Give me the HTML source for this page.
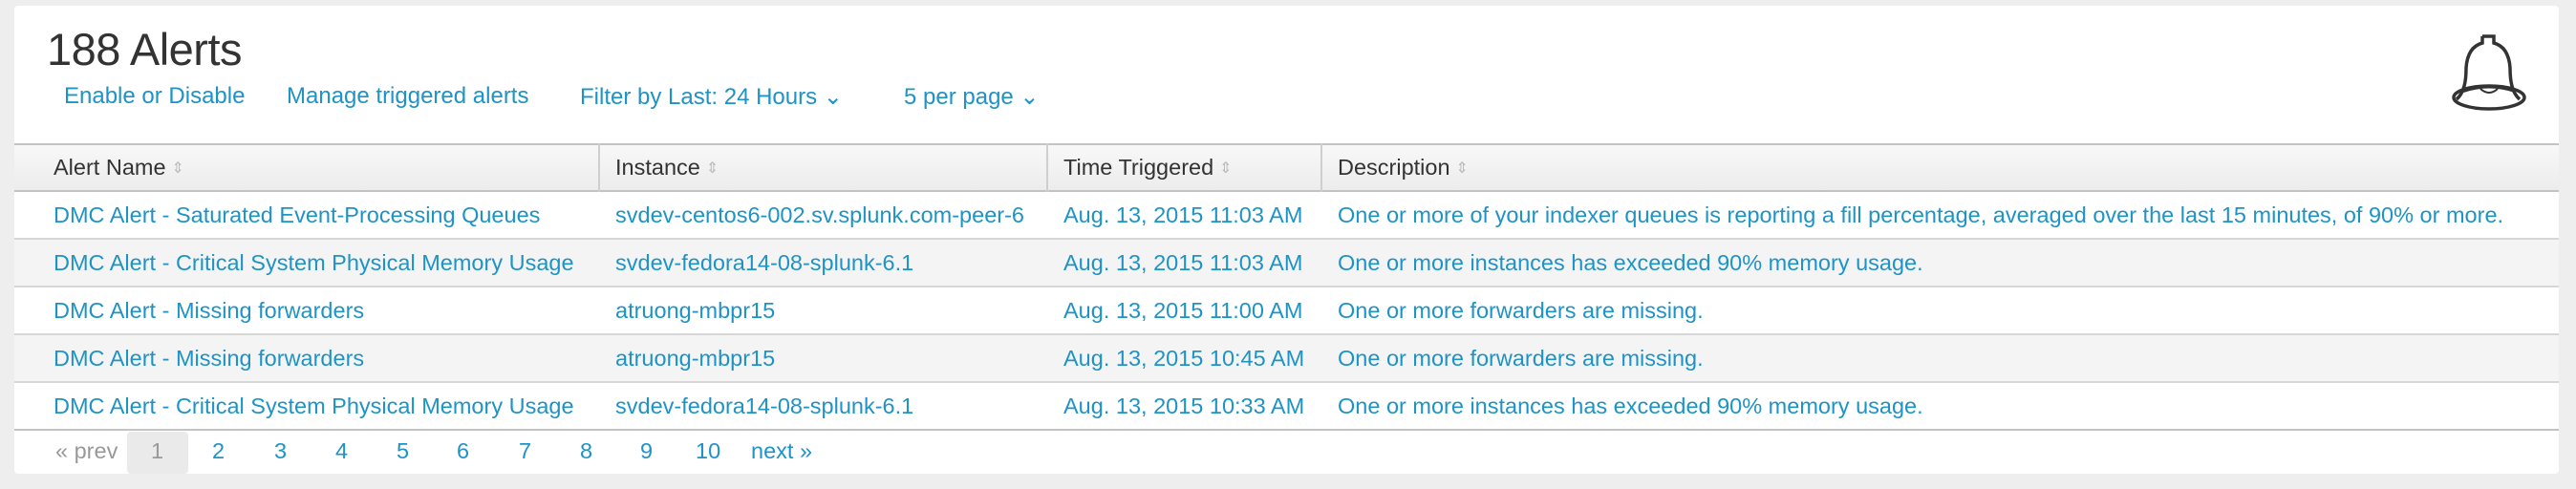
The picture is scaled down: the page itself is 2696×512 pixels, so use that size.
<!DOCTYPE html>
<html><head><meta charset="utf-8"><style>
*{margin:0;padding:0;box-sizing:border-box}
body{width:2696px;height:512px;background:#eeeeee;font-family:"Liberation Sans",sans-serif;position:relative;overflow:hidden}
.panel{position:absolute;left:15px;top:6px;width:2663px;height:490px;background:#fff;border-radius:4px}
.a{position:absolute;white-space:nowrap;color:#1e93c6}
.t{position:absolute;left:49px;top:24px;font-size:47px;color:#333;letter-spacing:-0.5px}
.lk{top:87px;font-size:24px}
.hdr{position:absolute;left:15px;top:150px;width:2663px;height:51px;background:linear-gradient(#f8f8f8,#ececec);border-top:2px solid #c3c3c3;border-bottom:2px solid #c3c3c3}
.row{position:absolute;left:15px;width:2663px;height:50px;border-bottom:2px solid #d6d6d6}
.v{position:absolute;top:150px;width:2px;height:51px;background:#cfcfcf}
.h{position:absolute;top:162px;font-size:23.5px;color:#333;white-space:nowrap}
.s{color:#bbb;font-size:16px;margin-left:6px;vertical-align:2px}
.c{font-size:23.5px;top:11px}
.pg{position:absolute;top:459px;font-size:23.5px;color:#1e93c6}
</style></head><body>
<div class="panel"></div>
<div class="t">188 Alerts</div>
<div class="a lk" style="left:67px">Enable or Disable</div>
<div class="a lk" style="left:300px">Manage triggered alerts</div>
<div class="a lk" style="left:607px">Filter by Last: 24 Hours &#8964;</div>
<div class="a lk" style="left:946px">5 per page &#8964;</div>
<svg style="position:absolute;left:2564px;top:34px" width="82" height="84" viewBox="0 0 82 84"><g fill="none" stroke="#333" stroke-width="3.5"><path d="M34 4h12v7c11 3 16 12 17 26 0 14 2 26 10 33"/><path d="M34 4v7c-11 3-16 12-17 26 0 14-2 26-10 33"/><ellipse cx="41" cy="68" rx="37" ry="12"/></g><path d="M14 62q27-9 54 0" fill="none" stroke="#333" stroke-width="2"/><path d="M32 59q9 8 18 0" fill="none" stroke="#333" stroke-width="2"/></svg>
<div class="hdr"></div>
<div class="v" style="left:626px"></div><div class="v" style="left:1095px"></div><div class="v" style="left:1382px"></div>
<div class="h" style="left:56px">Alert Name<span class="s">&#8661;</span></div>
<div class="h" style="left:644px">Instance<span class="s">&#8661;</span></div>
<div class="h" style="left:1113px">Time Triggered<span class="s">&#8661;</span></div>
<div class="h" style="left:1400px">Description<span class="s">&#8661;</span></div>

<div class="row" style="top:201px;background:#fff"><div class="a c" style="left:41px">DMC Alert - Saturated Event-Processing Queues</div><div class="a c" style="left:629px">svdev-centos6-002.sv.splunk.com-peer-6</div><div class="a c" style="left:1098px">Aug. 13, 2015 11:03 AM</div><div class="a c" style="left:1385px">One or more of your indexer queues is reporting a fill percentage, averaged over the last 15 minutes, of 90% or more.</div></div>
<div class="row" style="top:251px;background:#f4f4f4"><div class="a c" style="left:41px">DMC Alert - Critical System Physical Memory Usage</div><div class="a c" style="left:629px">svdev-fedora14-08-splunk-6.1</div><div class="a c" style="left:1098px">Aug. 13, 2015 11:03 AM</div><div class="a c" style="left:1385px">One or more instances has exceeded 90% memory usage.</div></div>
<div class="row" style="top:301px;background:#fff"><div class="a c" style="left:41px">DMC Alert - Missing forwarders</div><div class="a c" style="left:629px">atruong-mbpr15</div><div class="a c" style="left:1098px">Aug. 13, 2015 11:00 AM</div><div class="a c" style="left:1385px">One or more forwarders are missing.</div></div>
<div class="row" style="top:351px;background:#f4f4f4"><div class="a c" style="left:41px">DMC Alert - Missing forwarders</div><div class="a c" style="left:629px">atruong-mbpr15</div><div class="a c" style="left:1098px">Aug. 13, 2015 10:45 AM</div><div class="a c" style="left:1385px">One or more forwarders are missing.</div></div>
<div class="row" style="top:401px;background:#fff;border-bottom:2px solid #c3c3c3"><div class="a c" style="left:41px">DMC Alert - Critical System Physical Memory Usage</div><div class="a c" style="left:629px">svdev-fedora14-08-splunk-6.1</div><div class="a c" style="left:1098px">Aug. 13, 2015 10:33 AM</div><div class="a c" style="left:1385px">One or more instances has exceeded 90% memory usage.</div></div>

<div style="position:absolute;left:133px;top:452px;width:64px;height:44px;background:#eaeaea;border-radius:4px"></div>
<div class="pg" style="left:58px;color:#999">« prev</div>
<div class="pg" style="left:158px;color:#999">1</div>
<div class="pg" style="left:222px">2</div><div class="pg" style="left:287px">3</div><div class="pg" style="left:351px">4</div><div class="pg" style="left:415px">5</div><div class="pg" style="left:478px">6</div><div class="pg" style="left:543px">7</div><div class="pg" style="left:607px">8</div><div class="pg" style="left:670px">9</div><div class="pg" style="left:728px">10</div><div class="pg" style="left:786px">next »</div>
</body></html>
